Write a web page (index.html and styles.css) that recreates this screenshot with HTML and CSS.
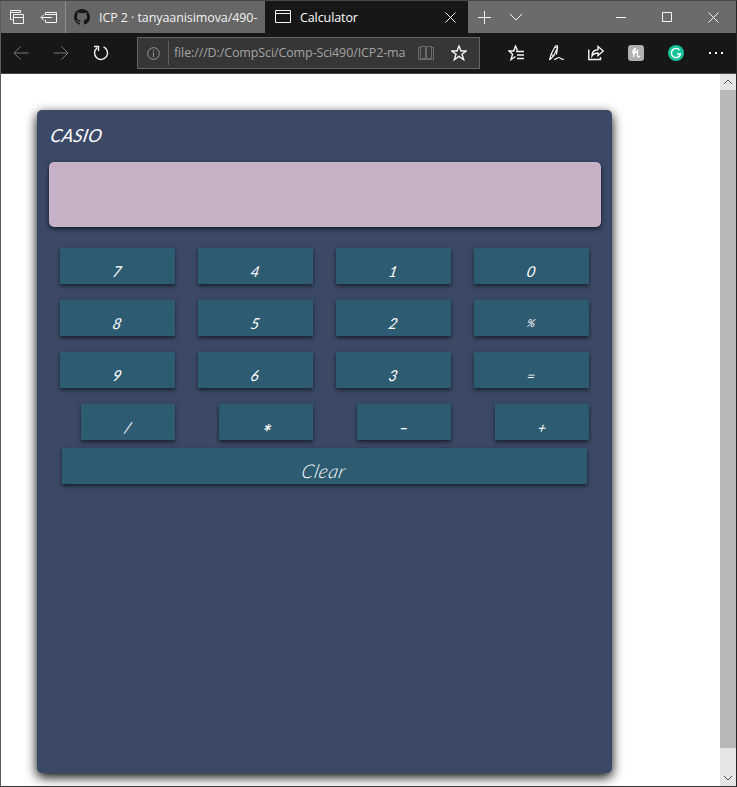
FILE: index.html
```
<!DOCTYPE html>
<html lang="en">
<head>
<meta charset="utf-8">
<title>Calculator</title>
<link rel="stylesheet" href="styles.css">
</head>
<body>
<div class="window">
  <header class="tabs">
    <div class="tab-tool"><svg width="16" height="16" viewBox="0 0 16 16"><path d="M3.500 10.500h-2v-9h10v2M1.500 3.500h10M4.500 5.500h10v9h-10zM4.500 8.500h10"/></svg></div>
    <div class="tab-tool edge"><svg width="18" height="16" viewBox="0 0 18 16"><path d="M5.500 6V3.500h11v10h-11V11M5.500 5.500h11M12 8.500H1M4 5.500l-3 3 3 3"/></svg></div>
    <div class="tab github"><svg class="cat" width="16" height="16" viewBox="0 0 16 16"><path d="M8 0C3.580 0 0 3.580 0 8c0 3.540 2.290 6.530 5.470 7.590.4.070.55-.17.55-.38 0-.19-.01-.82-.01-1.490-2.010.37-2.530-.49-2.690-.94-.09-.23-.48-.94-.82-1.130-.28-.15-.68-.52-.01-.53.63-.01 1.080.58 1.230.82.72 1.210 1.870.87 2.330.66.07-.52.28-.87.51-1.070-1.780-.2-3.640-.89-3.640-3.950 0-.87.31-1.590.82-2.150-.08-.2-.36-1.020.08-2.120 0 0 .67-.21 2.200.82a7.600 7.600 0 0 1 4 0c1.530-1.040 2.200-.82 2.200-.82.44 1.100.16 1.920.08 2.120.51.56.82 1.270.82 2.150 0 3.070-1.870 3.750-3.650 3.950.29.25.54.73.54 1.480 0 1.070-.01 1.930-.01 2.200 0 .21.15.46.55.38A8 8 0 0 0 16 8c0-4.420-3.580-8-8-8z"/></svg><span class="tab-title">ICP 2 · tanyaanisimova/490-</span></div>
    <div class="tab active"><svg width="16" height="14" viewBox="0 0 16 14"><path d="M.5.5h15v12H.5zM.5 3.500h15"/></svg><span class="tab-title calc-title">Calculator</span><svg class="close" width="11" height="11" viewBox="0 0 11 11"><path d="M.5.5l10 10M10.500.5l-10 10"/></svg></div>
    <div class="new-tab"><svg width="13" height="13" viewBox="0 0 13 13"><path d="M6.500 0v13M0 6.500h13"/></svg></div>
    <div class="new-tab"><svg width="14" height="8" viewBox="0 0 14 8"><path d="M1 1l6 6 6-6"/></svg></div>
    <div class="controls">
      <span><svg width="10" height="10" viewBox="0 0 10 10"><path d="M0 5.500h10"/></svg></span>
      <span><svg width="10" height="10" viewBox="0 0 10 10"><path d="M.5.5h9v9h-9z"/></svg></span>
      <span><svg width="11" height="11" viewBox="0 0 11 11"><path d="M.5.5l10 10M10.500.5l-10 10"/></svg></span>
    </div>
  </header>
  <nav class="toolbar">
    <span class="tool dim"><svg width="16" height="16" viewBox="0 0 16 16"><path d="M15.500 8H1M7.500 1.500L1 8l6.500 6.500"/></svg></span>
    <span class="tool dim"><svg width="16" height="16" viewBox="0 0 16 16"><path d="M.5 8H15M8.500 1.500L15 8l-6.500 6.500"/></svg></span>
    <span class="tool"><svg class="bold" width="16" height="16" viewBox="0 0 16 16"><path d="M10.500 1.900A6.500 6.500 0 1 1 4.200 2.700M1 1.500h4.500V6"/></svg></span>
    <div class="address">
      <span class="info"><svg width="13" height="13" viewBox="0 0 13 13"><circle cx="6.500" cy="6.500" r="5.800"/><path d="M6.500 5.500V10M6.500 3v1.300"/></svg></span>
      <span class="url">file:///D:/CompSci/Comp-Sci490/ICP2-ma</span>
      <svg class="book" width="16" height="16" viewBox="0 0 16 16"><path d="M2.500 1.500h5v12h-5zM8.500 1.500h5v12h-5zM2.500 2.500h-2v12h15v-12h-2M8 1v14"/></svg>
      <svg class="star bold" width="16" height="16" viewBox="0 0 16 16"><path d="M8 1l2 5h5.200l-4.200 3.300 1.700 5.400L8 11.400l-4.700 3.300L5 9.300.8 6H6z"/></svg>
    </div>
    <div class="actions">
      <span><svg class="bold" width="16" height="16" viewBox="0 0 16 16"><path d="M9.500 5.500L7.500 1 5.700 6H1l3.600 3.300L3 14.500 7.500 11.500M8 6.500h8M9 10h7M9 13.500h7"/></svg></span>
      <span><svg class="pen" width="17" height="16" viewBox="0 0 17 16"><path d="M1.500 15L3 9.500 6.800 2C8 0 10 .4 9.500 2.500L6 10.500 1.500 15M3 9.500l3 1M7 2l2.300 1M9.500 2.500l-1 7M6 14.500c2.500 0 3.500-2 5-2 2 0 1.500 3 5 1.500"/></svg></span>
      <span><svg class="bold" width="16" height="16" viewBox="0 0 16 16"><path d="M.8 4.500v10h11.700V12M4 11c0-4.500 2-6.300 6-6.300V1.500L15.300 6 10 10.500V8C7 8 5.500 8.500 4 11z"/></svg></span>
      <span><svg class="honey" width="16" height="16" viewBox="0 0 16 16"><rect width="16" height="16" rx="3"/><path d="M4 5.500c2 0 4-.5 3.500-2C6.500 2 5.500 7 5.500 12c.5-4 1.500-5 3-5 2 0 0 5 2 5l1.500-1M4 7.500c3 .5 5-1 6.500-2.500"/></svg></span>
      <span><svg class="grammar" width="16" height="16" viewBox="0 0 16 16"><circle cx="8" cy="8" r="8"/><path d="M11.500 5A4.600 4.600 0 1 0 12.500 9H9M12.500 9l-1.500 3"/></svg></span>
      <span class="dots"><i></i><i></i><i></i></span>
    </div>
  </nav>
  <div class="viewport">
    <main class="page">
      <section class="calculator">
        <h1>CASIO</h1>
        <div class="display"></div>
        <div class="keys">
          <button><span>7</span></button><button><span>4</span></button><button><span>1</span></button><button><span>0</span></button>
          <button><span>8</span></button><button><span>5</span></button><button><span>2</span></button><button class="small"><span>%</span></button>
          <button><span>9</span></button><button><span>6</span></button><button><span>3</span></button><button class="equals"><span>=</span></button>
          <button class="op"><span>/</span></button><button class="op star-key"><span>*</span></button><button class="op minus"><span>-</span></button><button class="op plus"><span>+</span></button>
        </div>
        <button class="clear"><span>Clear</span></button>
      </section>
    </main>
    <aside class="scrollbar">
      <span class="arrow"><svg width="10" height="6" viewBox="0 0 10 6"><path d="M1 5l4-4 4 4"/></svg></span>
      <span class="thumb"></span>
      <span class="arrow"><svg width="10" height="6" viewBox="0 0 10 6"><path d="M1 1l4 4 4-4"/></svg></span>
    </aside>
  </div>
</div>
</body>
</html>
```
FILE: styles.css
```
* { box-sizing: border-box; }
body { margin: 0; overflow: hidden; font-family: "Open Sans", "Noto Sans", sans-serif; }
svg { display: block; flex: none; fill: none; stroke: #f5f5f5; stroke-width: 1; }
.bold { stroke-width: 1.4; }
.pen { stroke-width: 1.2; }
.window { width: 737px; height: 787px; display: flex; flex-direction: column; border: 1px solid #5c5c5c; border-top-color: #474747; border-right-color: #252525; border-bottom-color: #343434; background: #fff; }
.tabs { height: 32px; flex: none; display: flex; background: #6b6b6b; color: #f2f2f2; }
.tab-tool { width: 32px; display: flex; align-items: center; justify-content: center; }
.edge { width: 33px; border-right: 1px solid #8d8d8d; }
.tab { display: flex; align-items: center; }
.github { width: 199px; padding-left: 8px; background: #666; }
.cat { fill: #181818; stroke: none; }
.tab-title { margin-left: 9px; white-space: nowrap; font-size: 12.5px; letter-spacing: -.08px; }
.active { width: 203px; padding-left: 10px; background: #171717; }
.calc-title { color: #fff; letter-spacing: -.1px; }
.close { margin-left: auto; margin-right: 12px; }
.new-tab { width: 32px; display: flex; align-items: center; justify-content: center; }
.controls { margin-left: auto; display: flex; }
.controls span { width: 46px; display: flex; align-items: center; justify-content: center; }
.toolbar { height: 41px; flex: none; display: flex; align-items: center; background: #171717; border-bottom: 1px solid #494949; }
.tool { width: 40px; display: flex; justify-content: center; }
.dim svg { stroke: #777; }
.address { width: 343px; height: 32px; margin-left: 16px; display: flex; align-items: center; border: 1px solid #656565; background: #363636; }
.info { width: 31px; height: 24px; display: flex; align-items: center; padding-left: 9px; border-right: 1px solid #606060; }
.info svg { stroke: #999; }
.url { width: 236px; margin-left: 5px; white-space: nowrap; color: #a3a3a3; font-size: 12.5px; line-height: 24px; letter-spacing: -.12px; }
.book { margin-left: 8px; stroke: #6b6b6b; }
.star { margin-left: 17px; }
.actions { display: flex; margin-left: 16px; }
.actions > span { width: 40px; height: 20px; display: flex; align-items: center; justify-content: center; }
.honey rect { fill: #b0b0b3; stroke: none; }
.honey { stroke: #fff; stroke-width: 1.3; }
.grammar { stroke: #fff; stroke-width: 1.4; }
.grammar circle { fill: #17c39a; stroke: none; }
.dots { gap: 4px; }
.dots i { width: 2px; height: 2px; background: #fff; }
.viewport { flex: 1; min-height: 0; display: flex; }
.page { flex: 1; padding: 36px 0 0 36px; overflow: hidden; }
.calculator { width: 575px; height: 663px; padding: 12px 11px 0; border-radius: 5px; background: #3b4966; box-shadow: 0 4px 12px #000; color: #fff; font-family: Lato, sans-serif; }
h1 { width: 60px; height: 26px; margin: 0 0 0 3px; font: italic 400 18px/26px Lato, sans-serif; letter-spacing: .3px; transform: skewX(-12deg); }
.display { width: 552px; height: 65px; margin: 14px 0 0 1px; border-radius: 5px; background: #c6b1c6; box-shadow: 0 2px 4px #111a25; }
.keys { display: grid; grid-template-columns: repeat(4, 115px); gap: 16px 23px; margin: 21px 0 0 12px; }
button { height: 36px; padding: 10px 0 0; border: 0; border-radius: 0; background: #2d5b72; box-shadow: 0 2px 4px rgba(0,0,0,.6); color: #fff; font: italic 15px/26px Lato, sans-serif; text-align: center; }
button span { display: inline-block; transform: skewX(-12deg); }
.op { width: 94px; justify-self: end; }
.small { font-size: 11px; padding-top: 10px; }
.equals, .plus { font-size: 14px; padding-top: 11px; }
.star-key { font-size: 21px; padding-top: 15px; font-weight: bold; }
.minus { padding-top: 9px; }
.minus span { transform: scaleX(1.7); }
.clear { display: block; width: 525px; margin: 8px 0 0 14px; font-size: 19px; font-weight: 300; letter-spacing: .7px; padding-top: 9px; }
.scrollbar { width: 16px; display: flex; flex-direction: column; background: #e5e5e5; }
.arrow { height: 16px; display: flex; align-items: center; justify-content: center; }
.arrow svg { stroke: #555; }
.thumb { height: 658px; background: #b8b8b8; }
.arrow:last-child { margin-top: auto; }
```
